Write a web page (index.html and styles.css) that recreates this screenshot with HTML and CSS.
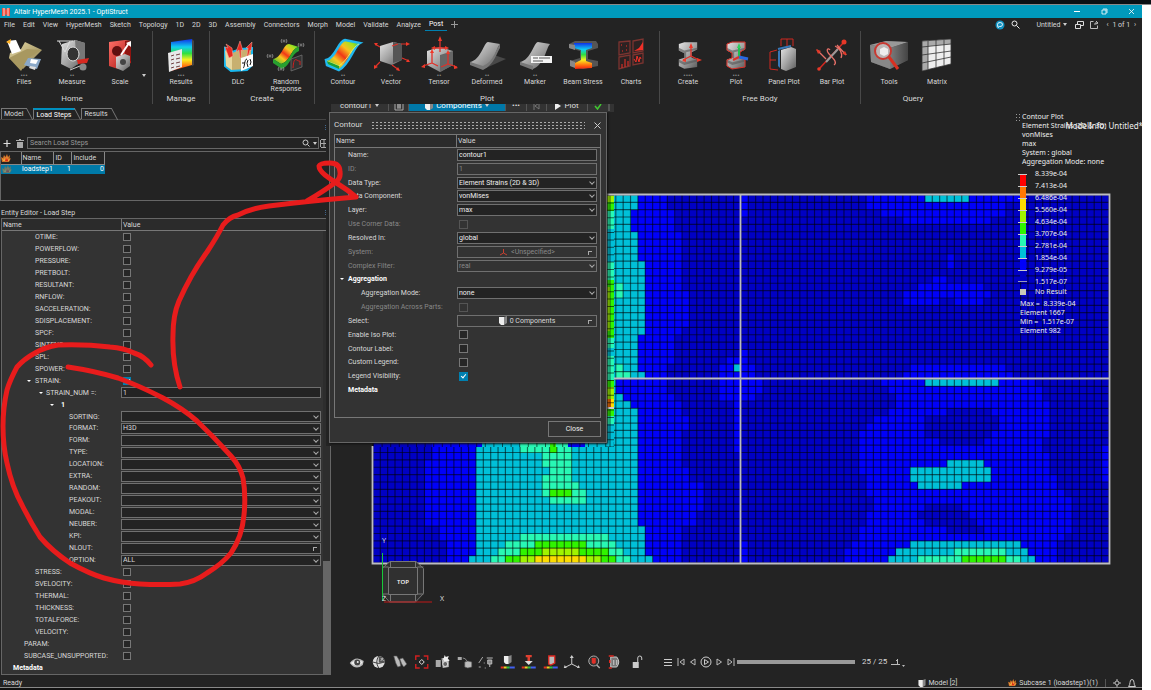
FILE: index.html
```html
<!DOCTYPE html>
<html lang="en">
<head>
<meta charset="utf-8">
<title>Altair HyperMesh 2025.1 - OptiStruct</title>
<link rel="stylesheet" href="styles.css">
</head>
<body>
<svg class="defs" aria-hidden="true">
  <defs>
    <linearGradient id="steel" x1="0" y1="0" x2="1" y2="1"><stop offset="0" stop-color="#e4e4e4"/><stop offset=".5" stop-color="#a4a4a4"/><stop offset="1" stop-color="#5c5c5c"/></linearGradient>
    <linearGradient id="dim" x1="0" y1="0" x2="1" y2="0"><stop offset="0" stop-color="#7c7c7c"/><stop offset="1" stop-color="#444"/></linearGradient>
    <linearGradient id="rain" x1="0" y1="0" x2="0" y2="1"><stop offset="0" stop-color="#1030e8"/><stop offset=".25" stop-color="#10d0f0"/><stop offset=".45" stop-color="#30e040"/><stop offset=".65" stop-color="#f8f020"/><stop offset=".85" stop-color="#ff7010"/><stop offset="1" stop-color="#f02010"/></linearGradient>
    <linearGradient id="heat" x1="1" y1="0" x2="0" y2="1"><stop offset="0" stop-color="#20c830"/><stop offset=".2" stop-color="#a8e020"/><stop offset=".35" stop-color="#f8c020"/><stop offset=".52" stop-color="#f03818"/><stop offset=".68" stop-color="#f8c820"/><stop offset="1" stop-color="#18c838"/></linearGradient>
    <linearGradient id="paper" x1="0" y1="0" x2="1" y2="1"><stop offset="0" stop-color="#e8dca8"/><stop offset="1" stop-color="#8a7a48"/></linearGradient>
    <linearGradient id="crimson" x1="0" y1="0" x2="1" y2="1"><stop offset="0" stop-color="#ff7068"/><stop offset="1" stop-color="#a81410"/></linearGradient>
    <symbol id="flame" viewBox="0 0 10 8"><path d="M1 8 0 3l2 1 1-3 1.500 2L6 0l1 3 2-2-.5 4L10 4 8 8z" fill="#d07028"/><path d="M2 7 1 4l2 2 1-3 1 2 1-3 1 4 2-2-1 3z" fill="#f0b040"/><path d="m4 7 1-4 1 3 1-2v3z" fill="#e02818"/></symbol>
    <symbol id="part" viewBox="0 0 8 9"><path d="M0 1h5v8H2L0 7z" fill="#eee"/><path d="M5 1 8 0v7L5 9z" fill="#888"/></symbol>
    <symbol id="ibeam" viewBox="0 0 24 30"><path d="M2 3 8 1h14v8l-6 3v6l6 2v8L8 30l-6-3v-7l6-2v-5L2 10z" fill="url(#steel)"/><path d="m2 10 6 3v5l2 1v-7l12-3v-2L8 10 2 7zM2 20l6 3 14-3v2L8 26l-6-3z" fill="#555" opacity=".6"/></symbol>
  </defs>
</svg>
<div class="desk"></div>
<div class="app">
  <header class="title">
    <svg width="8" height="8" viewBox="0 0 8 8"><path d="M0 0h3l1 2 1-2h3v8H5L4 6 3 8H0z" fill="#f0503c"/><path d="M2 0v8M6 0v8" stroke="#fff" stroke-width=".8"/></svg>
    <span class="grow">Altair HyperMesh 2025.1 - OptiStruct</span>
    <div class="winctl">
      <button aria-label="Minimize"><svg width="7" height="7"><path d="M0 3.500h6" stroke="#fff"/></svg></button>
      <button aria-label="Restore"><svg width="7" height="7" fill="none" stroke="#fff" stroke-width=".8"><path d="M1 2h4v4H1zM2 1h4v4"/></svg></button>
      <button aria-label="Close window"><svg width="7" height="7"><path d="m1 1 5 5m0-5L1 6" stroke="#fff" stroke-width=".8"/></svg></button>
    </div>
  </header>
  <nav class="menu">
    <button>File</button><button>Edit</button><button>View</button><button>HyperMesh</button><button>Sketch</button><button>Topology</button><button>1D</button><button>2D</button><button>3D</button><button>Assembly</button><button>Connectors</button><button>Morph</button><button>Model</button><button>Validate</button><button>Analyze</button><button class="on">Post</button><button aria-label="Add ribbon" class="plus"><svg width="7" height="7"><path d="M3.500 0v7M0 3.500h7" stroke="#999"/></svg></button>
    <span class="grow"></span>
    <div class="menuright">
      <svg width="10" height="10"><circle cx="5" cy="5" r="4.500" fill="#1090c0"/><path d="M3 7.500 2.500 4.500a2.500 2 0 1 1 2 2z" fill="none" stroke="#fff" stroke-width=".9"/></svg>
      <svg width="9" height="9" fill="none" stroke="#eee"><circle cx="3.500" cy="3.500" r="2.500"/><path d="m5.500 5.500 3 3"/></svg>
      <button class="doc">Untitled <i></i></button>
      <svg width="9" height="8" fill="#232323" stroke="#ddd"><path d="M2.500.5h6v4h-6z"/><path d="M.5 3.500h5v4h-5z"/></svg>
      <svg width="9" height="9" fill="none" stroke="#bbb"><path d="M3.500 1.500h-3v7h7v-3M6 1l2 2-2 1M5 5V3h3"/></svg>
      <span class="pages"><b>‹</b> 1 of 1 <b>›</b></span>
    </div>
  </nav>

  <div class="ribbon">
    <section class="group home">
      <div class="tools">
        <button class="tool"><svg viewBox="0 0 38 36"><path d="m5 15 11-4 4-7 17 8-19 19L4 20z" fill="url(#paper)"/><path d="m4 20 18-9 14 1-12 8-8 13z" fill="#a89860"/><path d="m2 3 9-1 5 11-9 3z" fill="#fff"/><path d="m1 4 5-3-1 5z" fill="#ffb020"/><path d="m23 20 13 1-4 10-13-4z" fill="#8aa8c8"/><path d="m26 21 7 1-2 4-6-1z" fill="#fff"/><path d="m25 28 6 1-1 3-6-2z" fill="#ddd"/></svg><em>•••</em>Files</button>
        <button class="tool"><svg viewBox="0 0 38 36"><path d="m9 6 13-4 10 3v16L18 31 8 26z" fill="url(#steel)"/><path d="m22 2 10 3v16l-8 6z" fill="#777"/><ellipse cx="20" cy="16" rx="6" ry="7" fill="#333" stroke="#ddd"/><path d="M4 3h16M6 3l6 11 5-11" fill="none" stroke="#ddd"/><path d="m24 22 12-2-2 5-9 1z" fill="#d82820"/><path d="m17 32 10-4" stroke="#ccc"/><circle cx="30" cy="29" r="3.500" fill="#888"/></svg><em>••</em>Measure</button>
        <button class="tool"><svg viewBox="0 0 38 36"><path d="m8 4 16-2 6 1v22l-13 6-9-3z" fill="url(#crimson)"/><path d="M24 3v23l6-3V3z" fill="#901410"/><circle cx="16" cy="13" r="5" fill="#601010"/><path d="m15 19 9-3 5 2v10l-7 5-7-3z" fill="url(#steel)"/><circle cx="22" cy="24" r="3" fill="#444"/><path d="m20 17 8-12" stroke="#fff" stroke-width="2"/><path d="m25 5 5-2v6z" fill="#fff"/></svg><em>&nbsp;</em>Scale</button>
        <i class="more"></i>
      </div><h2>Home</h2>
    </section>
    <section class="group">
      <div class="tools">
        <button class="tool"><svg viewBox="0 0 38 36"><path d="m9 4 21-3v26L9 33z" fill="url(#rain)"/><path d="m30 1 2 2v24l-2 1z" fill="#444"/><path d="m6 15 14-4v18L7 34z" fill="#e8e8e8"/><path d="m9 18 3-1m-3 5 3-1m-3 5 3-1m-3 5 3-1m2-12 4-1m-4 5 4-1m-4 5 4-1m-4 5 4-1" stroke="#704040"/></svg><em>•••</em>Results</button>
      </div><h2>Manage</h2>
    </section>
    <section class="group">
      <div class="tools">
        <button class="tool"><svg viewBox="0 0 38 36"><path d="m6 10 7 4 9-3 11-1v17l-5 5-16 1-6-5z" fill="#c8b070" stroke="#18b8f0" stroke-width="2"/><path d="m6 12 7 7v13l-6-4z" fill="#e8d8a0"/><path d="m10 20-4-11 3 1-2-4 6 4 1 8zM21 20l-1-8-3 2 4-11 3 10-2-1v8zM28 18l1-8-2 0 6-6-1 9-1-1-2 7z" fill="#e82820" stroke="#ffb0a0" stroke-width=".5"/><path d="m22 20 12-4v12l-12 5z" fill="#fff"/><path d="M24 30c2 0 1-9 4-9m-5 4h3m3-3q-2 3 0 7m2-8q2 3 0 6" stroke="#111" fill="none"/></svg><em>&nbsp;</em>DLC</button>
        <button class="tool"><svg viewBox="0 0 38 36"><path d="M6 21C15 20 16 6 22 6l10 3c-8 1-8 14-18 17z" fill="url(#heat)"/><path d="m6 21 8 5c10-3 10-16 18-17v4c-8 3-8 14-17 18l-9-6z" fill="#28a030"/><path d="m24 21 11-4v12l-11 4z" fill="#333" stroke="#777" stroke-width=".7"/><path d="M26 30c1-14 4-6 7-7v4" stroke="#d02020" fill="none"/><g fill="none" stroke="#999" stroke-width=".8"><circle cx="17" cy="3" r="1"/><path d="M15 1q-2 2 0 4m4-4q2 2 0 4"/><circle cx="34" cy="7" r="1"/><path d="M32 5q-2 2 0 4m4-4q2 2 0 4"/><circle cx="3" cy="18" r="1"/><path d="M1 16q-2 2 0 4m4-4q2 2 0 4"/><circle cx="14" cy="31" r="1"/><path d="M12 29q-2 2 0 4m4-4q2 2 0 4"/></g></svg><em>&nbsp;</em>Random<br>Response</button>
      </div><h2>Create</h2>
    </section>
    <section class="group">
      <div class="tools">
        <button class="tool"><svg viewBox="0 0 38 36"><path d="M2 22C12 20 14 3 21 2l15 3c-7 4-10 21-21 27L3 27z" fill="url(#heat)" stroke="#20b8f0" stroke-width="2.500"/><path d="m3 23 12 5C25 21 28 9 35 6" fill="none" stroke="#d8f070" stroke-width="1"/><path d="m3 23 12 5v3L4 26z" fill="#18a038"/></svg><em>••</em>Contour</button>
        <button class="tool"><svg viewBox="0 0 38 36"><path d="m8 8 13-4 9 2v16l-10 5-12-4z" fill="url(#steel)"/><path d="m21 4 9 2v16l-9 3z" fill="#555"/><g stroke="#e03028" stroke-width="1.200"><path d="m8 9-5-3M29 6h7M8 24l-5 5M20 27l7 5M30 20l7 3M20 8l6-2"/></g><g fill="#f03828"><path d="m2 5 4 0-2 3zM38 6l-4-2v4zM2 31l0-4 4 2zM28 33l-4-1 2-3zM38 24l-4 0 2-3z"/></g></svg><em>••</em>Vector</button>
        <button class="tool"><svg viewBox="0 0 38 36"><path d="m7 13 13-4 13 4v14l-13 7-13-7z" fill="url(#steel)"/><path d="m20 17 13-4v14l-13 7z" fill="#666"/><path d="M20 14V0M12 25V13m0 12-9 3m9-3 6 3M28 26V14m0 12-7 3m7-3 9 3M13 10h14" stroke="#e03028" stroke-width="1.300" fill="none"/><path d="m20-2 2 5h-4zM12 11l2 4h-4zM28 12l2 4h-4zM1 29l4-3v4zM38 30l-4-3v4zM11 10l4-2v4zM29 10l-4-2v4z" fill="#f03828"/></svg><em>••</em>Tensor</button>
        <button class="tool"><svg viewBox="0 0 38 36"><path d="m12 25 14-8 12 4-20 9z" fill="#484848"/><path d="M2 24C13 22 16 4 20 4l12 2c-4 4-5 20-17 25z" fill="url(#steel)"/><path d="m2 24 13 4c11-4 13-18 17-22v4c-3 4-6 17-17 22L2 27z" fill="#777"/></svg><em>••</em>Deformed</button>
        <button class="tool"><svg viewBox="0 0 38 36"><path d="M4 24C15 22 18 4 22 4l12 2c-4 4-5 20-17 25z" fill="url(#steel)"/><path d="m4 24 13 4v4L4 27z" fill="#777"/><path d="M15 18h21v7H15z" fill="#f4f4f4"/><path d="M17 20h5m1 0h11M17 23h10" stroke="#555" stroke-width="1"/></svg><em>••</em>Marker</button>
        <button class="tool"><svg viewBox="0 0 38 36"><path d="m5 6 6-3h21l2 3v4l-10 3v8l10 2v5l-15 3-13-3v-5l10-3v-7L5 10z" fill="#555"/><path d="M10 5h18v5l-6 2v11l6 2v5l-17 1v-6l6-3V12l-7-2z" fill="url(#rain)"/><path d="m5 6 6 1v5l-6-2zM6 22l5 2v6l-5-2z" fill="#888"/></svg><em>&nbsp;</em>Beam Stress</button>
        <button class="tool"><svg viewBox="0 0 38 36"><g fill="#2c2222" stroke="#7c3430" stroke-width="1.300"><path d="m7 4 11-1v12L7 17zM21 3l10-2v12l-10 2zM7 19l11-2v11L7 31zM21 17l10-2v10l-10 2z"/></g><g fill="#f03028" stroke="#f03028"><path d="M9 7h1m4 1h1m-5 5h1m3-1h1"/><path d="m22 13 5-3 4-6v8z" stroke="none"/><path d="M10 30v-4m3 3v-8m3 7v-5"/><path d="m22 21 2 3 1-6 2 6 1-5 1 2" fill="none"/></g></svg><em>&nbsp;</em>Charts</button>
      </div><h2>Plot</h2>
    </section>
    <section class="group">
      <div class="tools">
        <button class="tool"><svg viewBox="0 0 38 36"><use href="#ibeam" x="8" y="3" width="22" height="28"/><path d="M22 18V8m0 10 8 4m-8-4-8 4" stroke="#e03028" stroke-width="1.300"/><path d="m22 5 2 5h-4zM33 22l-5-2v4zM13 23l4-3v4z" fill="#f03828"/></svg><em>••••</em>Create</button>
        <button class="tool"><svg viewBox="0 0 38 36"><use href="#ibeam" x="8" y="3" width="22" height="28"/><path d="m10 6 5-2h13v7l-5 3v6l5 2v7l-13 2-5-3v-6l5-2v-5l-5-3z" fill="none" stroke="#e03028"/><path d="M22 19V9" stroke="#20c050" stroke-width="2"/><path d="m22 5 2 5h-4z" fill="#30d060"/><path d="m22 19 9 2" stroke="#2868e0" stroke-width="3"/><path d="m22 19-6 3" stroke="#e03028" stroke-width="2"/></svg><em>•••</em>Plot</button>
        <button class="tool"><svg viewBox="0 0 38 36"><path d="m16 12 10-3 5 2v18l-10 4-5-2z" fill="url(#steel)"/><path d="m13 13 2-1v18l-2-2z" fill="#3878b8"/><path d="m13 11 13-3" stroke="#3878b8" stroke-width="2"/><path d="M5 14v17m0-17 7-2M5 22h6m-6 9 8 1M16 8V1h12v7M22 1v7" fill="none" stroke="#d02820" stroke-width="1"/></svg><em>&nbsp;</em>Panel Plot</button>
        <button class="tool"><svg viewBox="0 0 38 36"><path d="M6 31 32 3" stroke="#d02820" stroke-width="1.600"/><path d="m13 24 12-13" stroke="#999" stroke-width="2"/><path d="m4 12 9 9m11-14 9 10M17 12c-2-3-5 0 0 5s7 8 4 10M22 8c5 2 8 8 6 12" fill="none" stroke="#e87068" stroke-width="1.300"/><path d="m3 11 5 2-3 3zM34 17l-5-1 3-3z" fill="#e03828"/><circle cx="31" cy="4" r="2.500" fill="#e83828"/><circle cx="6" cy="31" r="1.800" fill="#e83828"/></svg><em>&nbsp;</em>Bar Plot</button>
      </div><h2>Free Body</h2>
    </section>
    <section class="group last">
      <div class="tools">
        <button class="tool"><svg viewBox="0 0 38 36"><path d="m0 7 16-4 22 1v18L20 31 1 24z" fill="#555"/><path d="m0 7 20 3v21L1 24z" fill="#888"/><path d="m0 7 16-4 22 1-18 6z" fill="#999"/><path d="m20 10 18-6v18l-18 9z" fill="url(#dim)"/><circle cx="13" cy="13" r="8" fill="#c8c0c0" fill-opacity=".8" stroke="#c83830" stroke-width="2"/><path d="m10 11 4-2 4 2v5l-4 2-4-2z" fill="#eee"/><path d="m19 19 9 12" stroke="#d83020" stroke-width="3"/></svg><em>&nbsp;</em>Tools</button>
        <button class="tool"><svg viewBox="0 0 38 36"><path d="m4 3 29-2v25L4 33z" fill="#eee"/><path d="m4 3 29-2v5L4 9z" fill="#aaa"/><path d="m4 3 6 0v28l-6 2z" fill="#aaa"/><path d="m4 3 29-2v25L4 33zM4 9l29-3M4 17l29-4M4 25l29-6M10 3v28M18 2v27M26 2v25" stroke="#333" stroke-width=".8" fill="none"/></svg><em>&nbsp;</em>Matrix</button>
      </div><h2>Query</h2>
    </section>
  </div>

  <main class="work">
    <aside class="side">
      <div class="tabs"><button>Model</button><button class="on">Load Steps</button><button>Results</button></div>
      <div class="grip">⁝</div>
      <div class="search">
        <button aria-label="Add"><svg width="8" height="8"><path d="M4 1v7M.5 4.500h7" stroke="#ddd" stroke-width="1.200"/></svg></button>
        <button aria-label="Delete"><svg width="8" height="9"><path d="M1 3h6v6H1zM0 1h8v1H0zM3 0h2v1H3z" fill="#aaa"/></svg></button>
        <div class="box"><input type="text" aria-label="Search Load Steps" placeholder="Search Load Steps"><svg width="8" height="8" fill="none" stroke="#ccc"><circle cx="3.500" cy="3.500" r="2.500"/><path d="m5.500 5.500 2 2"/></svg><i class="tri"></i></div>
        <svg width="7" height="9" fill="none" stroke="#aaa"><path d="M1 .5h6M.5 1v7M1 8.500h6M1 4.500h5M4 1v7"/></svg>
      </div>
      <div class="steps">
        <table>
          <thead><tr><th class="c0"><svg width="10" height="8"><use href="#flame"/></svg></th><th class="c1">Name</th><th class="c2">ID</th><th class="c3">Include</th></tr></thead>
          <tbody><tr><td><svg width="10" height="8" class="faded"><use href="#flame"/></svg></td><td class="c1">loadstep1</td><td class="num">1</td><td class="num">0</td></tr></tbody>
        </table>
      </div>
      <h3>Entity Editor - Load Step<span>⁝</span></h3>
      <div class="editor">
        <div class="head"><span>Name</span><span>Value</span></div>
        <div class="body">
          <div class="rows">
            <label class="row l2"><span>OTIME:</span><input type="checkbox"></label>
            <label class="row l2"><span>POWERFLOW:</span><input type="checkbox"></label>
            <label class="row l2"><span>PRESSURE:</span><input type="checkbox"></label>
            <label class="row l2"><span>PRETBOLT:</span><input type="checkbox"></label>
            <label class="row l2"><span>RESULTANT:</span><input type="checkbox"></label>
            <label class="row l2"><span>RNFLOW:</span><input type="checkbox"></label>
            <label class="row l2"><span>SACCELERATION:</span><input type="checkbox"></label>
            <label class="row l2"><span>SDISPLACEMENT:</span><input type="checkbox"></label>
            <label class="row l2"><span>SPCF:</span><input type="checkbox"></label>
            <label class="row l2"><span>SINTENS:</span><input type="checkbox"></label>
            <label class="row l2"><span>SPL:</span><input type="checkbox"></label>
            <label class="row l2"><span>SPOWER:</span><input type="checkbox"></label>
            <label class="row l2 open"><span>STRAIN:</span><input type="checkbox" checked></label>
            <label class="row l3 open"><span>STRAIN_NUM =:</span><input type="text" value="1"></label>
            <div class="row l4 open"><strong>1</strong></div>
            <label class="row l5"><span>SORTING:</span><span class="sel"><select><option></option></select></span></label>
            <label class="row l5"><span>FORMAT:</span><span class="sel"><select><option>H3D</option></select></span></label>
            <label class="row l5"><span>FORM:</span><span class="sel"><select><option></option></select></span></label>
            <label class="row l5"><span>TYPE:</span><span class="sel"><select><option></option></select></span></label>
            <label class="row l5"><span>LOCATION:</span><span class="sel"><select><option></option></select></span></label>
            <label class="row l5"><span>EXTRA:</span><span class="sel"><select><option></option></select></span></label>
            <label class="row l5"><span>RANDOM:</span><span class="sel"><select><option></option></select></span></label>
            <label class="row l5"><span>PEAKOUT:</span><span class="sel"><select><option></option></select></span></label>
            <label class="row l5"><span>MODAL:</span><span class="sel"><select><option></option></select></span></label>
            <label class="row l5"><span>NEUBER:</span><span class="sel"><select><option></option></select></span></label>
            <label class="row l5"><span>KPI:</span><span class="sel"><select><option></option></select></span></label>
            <label class="row l5"><span>NLOUT:</span><span class="sel pick"><input type="text"></span></label>
            <label class="row l5"><span>OPTION:</span><span class="sel"><select><option>ALL</option></select></span></label>
            <label class="row l2"><span>STRESS:</span><input type="checkbox"></label>
            <label class="row l2"><span>SVELOCITY:</span><input type="checkbox"></label>
            <label class="row l2"><span>THERMAL:</span><input type="checkbox"></label>
            <label class="row l2"><span>THICKNESS:</span><input type="checkbox"></label>
            <label class="row l2"><span>TOTALFORCE:</span><input type="checkbox"></label>
            <label class="row l2"><span>VELOCITY:</span><input type="checkbox"></label>
            <label class="row l1"><span>PARAM:</span><input type="checkbox"></label>
            <label class="row l1"><span>SUBCASE_UNSUPPORTED:</span><input type="checkbox"></label>
            <div class="row l0"><strong>Metadata</strong></div>
          </div>
          <div class="scroll"><i></i><b></b></div>
        </div>
      </div>
    </aside>

    <section class="view">
      <svg class="scene" viewBox="331 107 811 560" preserveAspectRatio="xMinYMin meet">
        <g transform="translate(373 195) scale(7.36)" shape-rendering="crispEdges">
          <path fill="#0000c4" d="M0 0h100v50H0z"/>
          <path fill="#0000fa" d="M31 0h9v2h1v3h1v8h1v5h-1v1h-1v4h-1v4h1v1h1v2h1v2h-1v5h1v2h2v4h-1v2h-2v5H31zM50 0h1v3h-1zM50 21h1v2h1v2h1v2h-1v1h-2v7h-1v-7h-2v-5h1v-1h2zM50 47h1v3h-1z
            M67 0h21v1h-2v2h-2v1H72V3h-3V2h-2zM78 8h1v2h-1zM76 11h2v1h5v1h1v1h-1v1h-4v-1h-2v1h-5v-2h2v-1h2z
            M73 23h13v1h1v1h3v1h1v2h1v5h-1v2h1v3h1v2h1v1h1v5h-1v1h-1v3H64v-2h1v-1h1v-2h1v-2h1v-2h-1v-3h-1v-6h1v-1h1v-1h2v-1h1v-2h-1v-1h-1v-1h3v-1h1zM99 34h1v5h-1zM8 30h6v20h-4v-3H9v-2H7v-9h1z"/>
          <path fill="#0000c4" d="M78 29h6v1h1v2h-1v1h-1v1h-6v-1h-2v-3h3zM75 42h5v1h1v1h1v1h1v1h-5v-1h-3v-1h-1v-1h1z"/>
          <path fill="#00c0d8" d="M14 0h22v2h-1v3h1v4h1v10h-1v5h1v1h-4v2h1v1h1v1h1v16h1v4h1v1H13v-1h1zM75 0h6v1h-6zM49 23h1v1h-1zM75 25h10v1H75zM78 36h5v1h1v2h-4v1h-6v-1h-1v-2h5zM73 47h15v1h1v1h1v1H70v-1h1v-1h2z"/>
          <path fill="#28f8b4" d="M33 12h1v2h-1zM33 23h1v1h1v1h-2zM20 30h7v9h1v1h1v2h-5v-1h-1v-3h1v-1h-1v-2h-3zM20 46h12v1h1v1h1v1h1v1H16v-1h1v-1h1v-1h2zM79 48h7v1h2v1H74v-1h5z"/>
          <path fill="#30f400" d="M24 34h1v1h-1zM24 40h3v1h-3zM22 47h7v1h3v1h1v1H18v-1h2v-1h2zM80 49h6v1h-6z"/>
          <path fill="#a0f400" d="M23 48h5v1h3v1H20v-1h3z"/>
          <path fill="#fcdc00" d="M22 49h7v1h-7z"/>
        </g>
        <g fill="none" stroke="#000" stroke-opacity=".55" transform="translate(373 195) scale(7.36)">
          <path d="M-.09 25h100.100" stroke-width="50" stroke-dasharray=".16 .84"/>
          <path d="M50-.09v50.100" stroke-width="100" stroke-dasharray=".16 .84"/>
        </g>
        <g>
          <path fill="#232323" d="M331 104h41v343h-41z"/>
          <path fill="#0000c4" d="M373 440h59v7h-59z"/><path fill="#0000fa" d="M432 440h50v7h-50zM568 440h17v7h-17z"/><path fill="#00c0d8" d="M482 440h86v7h-86zM585 440h29v7h-29zM606 195h8v252h-8z"/>
          <path fill="#28f8b4" d="M520 440h48v7h-48zM606 211h8v18h-8zM606 262h8v18h-8zM606 338h8v10h-8zM606 356h8v24h-8zM606 416h8v8h-8z"/>
          <path fill="#30f400" d="M550 442h6v5h-6zM606 202h8v9h-8zM606 280h8v7h-8zM606 331h8v7h-8zM606 380h8v7h-8zM606 409h8v7h-8z"/>
          <path fill="#a0f400" d="M606 195h8v7h-8zM606 287h4v44h-4zM606 387h8v12h-8z"/><path fill="#30f400" d="M610 287h4v44h-4z"/>
          <path fill="#ff7000" d="M606 399h5v8h-5z"/><path fill="#fcdc00" d="M611 399h3v8h-3z"/>
          <path d="M610 195v252" stroke="#000" stroke-opacity=".6"/><path d="M610 195v252" stroke="#000" stroke-opacity=".6" stroke-width="8" stroke-dasharray="1 6.400"/><path d="M373 444.500h241" stroke="#000" stroke-opacity=".6" stroke-width="5" stroke-dasharray="1 7.600"/>
          <path d="M606 408h8" stroke="#ccc" stroke-width="2"/>
        </g>
        <path d="M372.500 446V563.500h737v-369H606M740.500 195v368M614 378.500h495" fill="none" stroke="#bcbcc0" stroke-width="1.800"/>
        <g fill="#303030" stroke="#777">
          <path d="M390 561.500h26l7.500 7v25l-8 8.500h-26l-7-8v-26z"/><path d="M388.500 567.500h29v27h-29zM390.500 562v5m25-5v5m-25 27v7m25-7v7m-33-34h6m29 0h6m-41 27h6m29 0h6"/>
          <path d="M382.500 553v48" stroke="#18c838"/><path d="M384 602h48" stroke="#c01818"/>
        </g>
        <g class="axis"><text x="403" y="584" text-anchor="middle" class="top">TOP</text><text x="382" y="543">Y</text><text x="382" y="601">Z</text><text x="440" y="601">X</text></g>
      </svg>

      <div class="legend">
        <i class="handle"></i>
        <span class="info">ModelInfo: Untitled*</span>
        <p>Contour Plot<br>Element Strains (2D &amp; 3D)<br>vonMises<br>max<br>System : global<br>Aggregation Mode: none</p>
        <div class="scale">
          <div class="bar"><i class="r1"></i><i class="r2"></i><i class="r3"></i><i class="r4"></i><i class="r5"></i><i class="r6"></i><i class="r7"></i><i class="r8"></i><i class="r9"></i></div>
          <ol><li>8.339e-04</li><li>7.413e-04</li><li>6.486e-04</li><li>5.560e-04</li><li>4.634e-04</li><li>3.707e-04</li><li>2.781e-04</li><li>1.854e-04</li><li>9.279e-05</li><li>1.517e-07</li></ol>
        </div>
        <div class="nores"><i></i>No Result</div>
        <div class="minmax">Max =&nbsp; 8.339e-04<br>Element 1667<br>Min =&nbsp; 1.517e-07<br>Element 982</div>
      </div>

      <div class="viewbar">
        <div class="icons">
          <svg viewBox="0 0 16 14"><path d="M1 8q6-8 14-2l-1 4q-7 6-13-2z" fill="#bbb"/><path d="M2 8q6-5 12-1-5 7-12 1z" fill="#eee"/><circle cx="8.500" cy="7.500" r="3" fill="#444"/><circle cx="9" cy="7" r="1" fill="#eee"/></svg>
          <svg viewBox="0 0 16 14"><circle cx="8" cy="7" r="6" fill="#ddd"/><path d="M2 7q6 3 12 0M8 1q-4 6 0 12" fill="none" stroke="#444"/><path d="M8 7.500V1a6 6 0 0 1 6 6q-3 1.500-6 .5z" fill="#555"/><path d="m10 3 3 3m-3 0 2-3" stroke="#ddd" stroke-width=".7"/></svg>
          <svg viewBox="0 0 16 14"><path d="m2 1 3 0 3 5 1 5-3 1-2-4zM8 4l3-1 4 6-3 3-2-3z" fill="#bbb" stroke="#555" stroke-width=".6"/></svg>
          <svg viewBox="0 0 16 14"><path d="M2 5V1h4m4 0h4v4m0 4v4h-4m-4 0H2V9" fill="none" stroke="#d02020" stroke-width="1.400"/><path d="M8 4.500 10.500 7 8 9.500 5.500 7z" fill="none" stroke="#ddd"/></svg>
          <svg viewBox="0 0 16 14"><path d="M1 5h5v7H1z" fill="#aaa"/><path d="m7 5 7-1v8l-6 1z" fill="#bbb"/><path d="m10 0 1 2 3-1-1 3 2 2-3 0-2 2-1-3-3-1 3-1z" fill="#eee"/><circle cx="10.500" cy="9" r="2.500" fill="#666" stroke="#ddd"/></svg>
          <svg viewBox="0 0 16 14"><path d="M1 2h4v3H1z" fill="#aaa"/><path d="M6 3q3 0 4 3" stroke="#888" fill="none"/><path d="m8 7 3-1 4 1v5l-4 1-3-1z" fill="#bbb" stroke="#555" stroke-width=".6"/></svg>
          <svg viewBox="0 0 16 14"><path d="m1 8 4-6M1 12h2m3-4h1m0 5h1" stroke="#aaa"/><path d="M9 3h6m-5 2h4v4h-4zm2 4v3" stroke="#bbb" fill="#888"/></svg>
          <svg viewBox="0 0 16 14"><use href="#part" x="4" y="0" width="8" height="9"/><path d="M1 12.500h3" stroke="#e03020" stroke-width="2"/><path d="M4 12.500h3" stroke="#f0d020" stroke-width="2"/><path d="M7 12.500h3" stroke="#30c040" stroke-width="2"/><path d="M10 12.500h5" stroke="#4060f0" stroke-width="2"/></svg>
          <svg viewBox="0 0 16 14"><path d="M5 1h6M8 2v5" stroke="#e04030" stroke-width="2.500"/><path d="m4 6 4 4 4-4z" fill="#ddd"/><path d="M1 12.500h3" stroke="#e03020" stroke-width="2"/><path d="M4 12.500h3" stroke="#f0d020" stroke-width="2"/><path d="M7 12.500h3" stroke="#30c040" stroke-width="2"/><path d="M10 12.500h5" stroke="#4060f0" stroke-width="2"/></svg>
          <svg viewBox="0 0 16 14"><path d="M6 1h6v7l-4 2-2-1z" fill="#bbb" stroke="#e02820" stroke-width="1.300"/><path d="M1 12.500h3" stroke="#e03020" stroke-width="2"/><path d="M4 12.500h3" stroke="#f0d020" stroke-width="2"/><path d="M7 12.500h3" stroke="#30c040" stroke-width="2"/><path d="M10 12.500h5" stroke="#4060f0" stroke-width="2"/></svg>
          <svg viewBox="0 0 16 14"><path d="M8 9V2m0 7-6 3m6-3 6 3" stroke="#ccc"/><path d="m8 0 2 3H6zM0 13l1-3 2 3zM16 13l-3 0 2-3z" fill="#ccc"/></svg>
          <svg viewBox="0 0 16 14"><circle cx="8" cy="6" r="5" fill="#333" stroke="#aaa"/><path d="M6 3h4v5l-2 1-2-1z" fill="#e03028"/><path d="m11 10 3 3" stroke="#aaa" stroke-width="1.500"/></svg>
          <svg viewBox="0 0 16 14"><path d="M4 2h6q4 5 0 10H4zM7 5v5m3-5v5" fill="#777" stroke="#ccc"/><path d="M2 1h5M2 13h3m-2-5V5" stroke="#e02820" stroke-width="1.500"/></svg>
          <svg viewBox="0 0 16 14"><path d="m4 7 6 0v6H4z" fill="#ccc"/><path d="M9 7V3q0-2 2-2t2 2v2" stroke="#ccc" fill="none"/></svg>
        </div>
        <div class="play">
          <svg width="9" height="9" stroke="#ccc"><path d="M0 1.500h8M0 4.500h8M0 7.500h8"/></svg>
          <svg width="8" height="8" fill="none" stroke="#bbb"><path d="M1 0v8M7 1v6L3 4z"/></svg>
          <svg width="7" height="8" fill="none" stroke="#bbb"><path d="M6 1v6L1.500 4z"/></svg>
          <svg width="12" height="12" fill="none" stroke="#ccc"><circle cx="6" cy="6" r="5"/><path d="m4.500 3.500 4 2.500-4 2.500z"/></svg>
          <svg width="7" height="8" fill="none" stroke="#bbb"><path d="M1 1v6l4.500-3z"/></svg>
          <svg width="8" height="8" fill="none" stroke="#bbb"><path d="M7 0v8M1 1v6l4-3z"/></svg>
        </div>
        <input type="range" aria-label="Frame" min="1" max="25" value="25">
        <span class="frame">25 / 25</span>
        <svg width="15" height="9" stroke="#bbb"><path d="M0 6.500h9M6.500 1v5M5 2.500h2"/><path d="M11 7h3l-1.500 2z" fill="#bbb" stroke="none"/></svg>
      </div>

      <div class="backing"></div>
      <div class="peek">
        <div class="strip">
          <span class="p1">contour1 <i></i></span>
          <span class="p2"><svg width="10" height="10" fill="none" stroke="#aaa"><path d="M1 1h8v8H1zM3 4h4M3 6h4M4 3v5M6 3v5"/></svg></span>
          <span class="p3"><svg width="8" height="9"><use href="#part"/></svg> Components <i></i></span>
          <span class="p4">•••</span>
          <span class="p5"><svg width="7" height="8" fill="none" stroke="#777"><path d="M1 0v8M6 1v6L2 4z"/></svg></span>
          <span class="p6"><svg width="6" height="8"><path d="m0 0 6 4-6 4z" fill="#eee"/></svg> Plot</span>
          <span class="p7"><svg width="8" height="8" fill="none" stroke="#40c830" stroke-width="1.500"><path d="m1 4 2.500 3L7 2"/></svg></span>
          <span class="p8"></span>
        </div>
      </div>
      <div class="dialog" role="dialog" aria-label="Contour">
        <div class="dtitle"><span>Contour</span><i></i><button aria-label="Close dialog"><svg width="7" height="7"><path d="m.5.5 6 6m0-6-6 6" stroke="#ccc"/></svg></button></div>
        <div class="panel">
          <div class="head"><span>Name</span><span>Value</span></div>
          <div class="rows">
            <label class="row"><span>Name:</span><input type="text" value="contour1"></label>
            <label class="row off"><span>ID:</span><input type="text" value="1" disabled></label>
            <label class="row"><span>Data Type:</span><span class="sel"><select><option>Element Strains (2D &amp; 3D)</option></select></span></label>
            <label class="row"><span>Data Component:</span><span class="sel"><select><option>vonMises</option></select></span></label>
            <label class="row"><span>Layer:</span><span class="sel"><select><option>max</option></select></span></label>
            <label class="row off"><span>Use Corner Data:</span><input type="checkbox" disabled></label>
            <label class="row"><span>Resolved In:</span><span class="sel"><select><option>global</option></select></span></label>
            <label class="row off"><span>System:</span><button class="pickbtn" disabled><svg width="9" height="8"><path d="M4.500 1v4L1 7m3.500-2L8 7" stroke="#c84030" fill="none"/></svg> &lt;Unspecified&gt;</button></label>
            <label class="row off"><span>Complex Filter:</span><span class="sel"><select disabled><option>real</option></select></span></label>
            <div class="row open"><strong>Aggregation</strong></div>
            <label class="row sub"><span>Aggregation Mode:</span><span class="sel"><select><option>none</option></select></span></label>
            <label class="row sub off"><span>Aggregation Across Parts:</span><input type="checkbox" disabled></label>
            <label class="row"><span>Select:</span><button class="pickbtn"><svg width="8" height="9"><use href="#part"/></svg> 0 Components</button></label>
            <label class="row"><span>Enable Iso Plot:</span><input type="checkbox"></label>
            <label class="row"><span>Contour Label:</span><input type="checkbox"></label>
            <label class="row"><span>Custom Legend:</span><input type="checkbox"></label>
            <label class="row"><span>Legend Visibility:</span><input type="checkbox" checked></label>
            <div class="row"><strong>Metadata</strong></div>
          </div>
        </div>
        <button class="closebtn">Close</button>
      </div>
    </section>
  </main>

  <footer class="status">
    <span class="grow">Ready</span>
    <span class="model"><svg width="8" height="8"><use href="#part"/></svg>Model [2]</span>
    <span class="subcase"><svg width="9" height="7"><use href="#flame"/></svg>Subcase 1 (loadstep1)(1)</span>
    <i></i>
    <svg width="8" height="8" fill="none" stroke="#bbb"><circle cx="4" cy="4" r="2"/><path d="M4 0v2m0 4v2M0 4h2m4 0h2"/></svg>
    <svg width="8" height="8" fill="none" stroke="#ccc"><path d="M.5 7.500Q2 6 2 3.500q0-3 2-3t2 3q0 2.500 1.500 4z"/></svg>
  </footer>
  <div class="base"></div>
</div>
<svg class="marks" viewBox="0 0 400 600" width="400" height="600">
  <path d="M151 365Q144 356 134 353Q124 348 110 347Q85 344 58 345Q45 347 35 353Q24 359 17 367Q10 380 7 390Q3 408 3 426Q3 446 7 463Q12 487 22 505Q31 523 40 537Q52 551 70 563Q90 574 104 578Q122 583 140 584Q160 585 180 584Q195 582 207 573Q222 564 231 553Q242 537 244 515Q246 495 243 478Q240 466 231 456Q214 437 197 421Q182 408 163 398Q140 386 118 378Q95 371 68 367"/>
  <path d="M180 387q-8-24-7-52 0-20 6-34 12-27 28-49 10-15 16-27 6-8 15-10 14-7 31-9 40-5 87-9-8-7-18-13-8-5-13-9-6-5-6-9 1-3 11-3 10 0 10 9 1 6-4 10-12 9-29 19"/>
</svg>
</body>
</html>
```
FILE: styles.css
```css
* { box-sizing: border-box; }
html, body { height: 100%; }
body { margin: 0; display: flex; flex-direction: column; background: #fff; color: #d8d8d8; font: 7px/8px Roboto, "Liberation Sans", sans-serif; position: relative; overflow: hidden; }
button, input, select { font: inherit; color: inherit; background: none; border: 0; padding: 0; margin: 0; border-radius: 0; }
svg { display: block; flex: none; }
h2, h3, p, ol { margin: 0; padding: 0; font: inherit; list-style: none; }
strong { color: #fff; }
.defs { position: absolute; width: 0; height: 0; }
.grow { flex: 1; }
.desk { height: 5px; background: #0a1014; border-bottom: 1px solid #888; }
.app { flex: 1; min-height: 0; margin-right: 9px; background: #232323; display: flex; flex-direction: column; }

.title { height: 13px; background: #0099bc; color: #fff; display: flex; align-items: center; padding: 0 7px 0 2px; gap: 4px; }
.winctl { display: flex; gap: 20px; }
.menu { height: 13px; display: flex; align-items: stretch; padding: 0 4px 0 0; }
.menu > button { padding: 0 4px; white-space: nowrap; }
.menu .on { border-bottom: 1px solid #0080b0; color: #fff; }
.menuright { display: flex; align-items: center; gap: 6px; }
.doc { display: flex; align-items: center; gap: 2px; margin: 0 2px 0 10px; }
.doc i, .tri, .more, .peek i { border: 2px solid transparent; border-top: 3px solid #ccc; border-bottom: 0; width: 4px; }
.pages b { font-weight: 400; padding: 0 2px; }

.ribbon { height: 73px; display: flex; }
.group { border-right: 1px solid #484848; padding: 0 4px; display: flex; flex-direction: column; justify-content: space-between; }
.group.home { padding: 0 8px 0 0; }
.group.last { border: 0; }
.group h2 { text-align: center; font-size: 8px; line-height: 10px; }
.tools { display: flex; position: relative; }
.tool { width: 48px; display: flex; flex-direction: column; align-items: center; justify-content: flex-start; padding-top: 7px; line-height: 7px; white-space: nowrap; }
.tool svg { width: 38px; height: 36px; overflow: visible; }
.tool em { font-style: normal; font-size: 7px; line-height: 5px; color: #888; }
.more { position: absolute; right: -2px; top: 43px; }

.work { flex: 1; min-height: 0; display: flex; margin-top: 4px; }
.side { width: 331px; display: flex; flex-direction: column; }
.tabs { display: flex; height: 12px; border-bottom: 1px solid #444; padding-left: 1px; }
.tabs button { border: 1px solid #777; border-bottom: 0; border-right: 0; padding: 0 4px 0 2px; line-height: 8px; position: relative; margin-right: 6px; }
.tabs button::after { content: ""; position: absolute; right: -3px; top: -1px; height: 12px; border-right: 1px solid #777; transform: skewX(28deg); }
.tabs .on { border-top: 2px solid #0090c0; color: #fff; }
.tabs .on::after { top: -2px; }
.grip { height: 16px; text-align: right; padding: 4px 4px 0 0; }
.search { height: 14px; display: flex; align-items: center; gap: 5px; padding-left: 3px; }
.box { flex: 1; height: 12px; border: 1px solid #666; display: flex; align-items: center; gap: 3px; padding: 0 1px 0 2px; margin: 0 -4px 0 -2px; }
.box input { flex: 1; min-width: 0; }
.box input::placeholder { color: #999; opacity: 1; }
.search > svg { margin-right: 4px; }
.steps { height: 50px; border: 1px solid #666; border-right: 0; margin-top: 1px; }
.steps table { border-collapse: collapse; }
.steps th { font-weight: 400; text-align: left; height: 12px; padding: 0 1px; border-right: 1px solid #888; border-bottom: 1px solid #888; }
.steps td { background: #007aa8; color: #fff; height: 10px; padding: 0 1px; }
.steps th.c0 { width: 20px; padding: 0; }
.steps .c1 { width: 32px; }
.steps th.c2 { width: 18px; }
.steps th.c3 { width: 33px; }
.steps .num { text-align: right; }
.faded { opacity: .5; }
.side h3 { height: 17px; padding: 8px 4px 0 1px; display: flex; justify-content: space-between; font-size: 7px; }
.editor { flex: 1; min-height: 0; display: flex; flex-direction: column; background: #333; border: 1px solid #666; margin: 0 0 1px 1px; }
.head { display: flex; height: 12px; border-bottom: 1px solid #777; line-height: 12px; background: #2b2b2b; }
.head span { padding-left: 1px; }
.head span:first-child { width: 120px; border-right: 1px solid #777; }
.body { flex: 1; min-height: 0; display: flex; }
.rows { flex: 1; display: flex; flex-direction: column; }
.row { flex: 1; min-height: 0; display: flex; align-items: center; position: relative; }
.row > span:first-child, .row > strong { width: 119px; white-space: nowrap; flex: none; }
.l0 > :first-child { padding-left: 11px; }
.l1 > :first-child { padding-left: 22px; }
.l2 > :first-child { padding-left: 33px; }
.l3 > :first-child { padding-left: 44px; }
.l4 > :first-child { padding-left: 59px; }
.l5 > :first-child { padding-left: 67px; }
.open::before { content: ""; position: absolute; left: 25px; border: 2px solid transparent; border-top: 2px solid #fff; border-bottom: 0; }
.l3.open::before { left: 37px; }
.l4.open::before { left: 48px; }
.row input[type=text], .row select { width: 100%; height: 11px; border: 1px solid #707070; background: #232323; padding: 0 1px; appearance: none; min-width: 0; line-height: 8px; }
.row > input[type=text] { flex: 1; width: auto; }
.row .sel { flex: 1; display: flex; position: relative; }
.sel::after { content: ""; position: absolute; right: 3px; top: 3px; width: 3px; height: 3px; border: solid #aaa; border-width: 0 1px 1px 0; transform: rotate(45deg); }
.sel.pick::after, .pickbtn::after { content: ""; width: 3px; height: 3px; border: solid #aaa; border-width: 1px 0 0 1px; transform: none; top: 4px; right: 4px; }
.row input[type=checkbox] { appearance: none; width: 8px; height: 8px; margin: 0 2px; background: #262626; border: 1px solid #777; position: relative; }
.row input[type=checkbox]:checked { background: #0080b0; border-color: #0080b0; }
.row input:checked::after { content: ""; position: absolute; left: 2px; top: 0; width: 2px; height: 4px; border: solid #fff; border-width: 0 1px 1px 0; transform: rotate(40deg); }
.scroll { width: 7px; margin-left: 2px; background: #2d2d2d; display: flex; flex-direction: column; align-items: center; }
.scroll i { flex: 330; }
.scroll b { flex: 113; width: 100%; background: #666; }

.view { flex: 1; position: relative; display: flex; flex-direction: column; justify-content: flex-end; }
.scene { position: absolute; left: 0; top: -1px; width: 100%; height: 100%; overflow: hidden; }
.axis { fill: #ddd; font: 7px "Noto Sans", sans-serif; }
.axis text { stroke: none; }
.axis .top { font: 600 6px "Open Sans", sans-serif; fill: #fff; }

.legend { position: absolute; right: 0; top: 4px; width: 123px; padding-left: 1px; color: #eee; font: 7px/9px "Noto Sans", "Open Sans", sans-serif; white-space: nowrap; }
.legend p { padding-left: 2px; }
.legend .info { position: absolute; right: -1px; top: 9px; font-size: 8px; }
.handle { position: absolute; left: -4px; top: 1px; width: 6px; height: 8px; background: radial-gradient(circle, #999 40%, transparent 45%) 0 0 / 3px 3px; }
.scale { display: flex; gap: 9px; margin-top: 2px; }
.bar { margin: 6px 0 0; width: 6px; }
.bar i { display: block; height: 12px; position: relative; }
.bar i::before { content: ""; position: absolute; left: -2px; top: 0; width: 9px; height: 1px; background: #ccc; }
.bar .r9::after { content: ""; position: absolute; left: -2px; bottom: 0; width: 9px; height: 1px; background: #99b; }
.r1 { background: #f00; } .r2 { background: #ff7800; } .r3 { background: #fcdc00; } .r4 { background: #a0f400; } .r5 { background: #30f400; } .r6 { background: #28f8b4; } .r7 { background: #00c0d8; } .r8 { background: #0000fa; } .r9 { background: #0000c4; }
.scale li { height: 12px; line-height: 12px; }
.nores { display: flex; align-items: center; gap: 9px; margin-top: -1px; }
.nores i { width: 6px; height: 6px; background: #c8c8b8; }
.minmax { margin-top: 3px; }

.viewbar { display: flex; align-items: center; height: 14px; padding-left: 15px; margin-bottom: 7px; position: relative; }
.icons { display: flex; width: 301px; }
.icons svg { flex: 1; min-width: 0; height: 14px; }
.play { display: flex; align-items: center; gap: 4px; margin: 0 2px 0 17px; }
.viewbar input { appearance: none; width: 118px; height: 4px; background: #999; margin: 0; }
.viewbar input::-webkit-slider-thumb { appearance: none; width: 1px; height: 4px; background: #999; }
.frame { font-size: 8px; padding: 0 4px 0 7px; }

.backing { position: absolute; left: -5px; top: -1px; width: 8px; height: 339px; background: #232323; }
.peek { position: absolute; left: 0; top: -4px; width: 283px; height: 8px; overflow: hidden; display: flex; align-items: flex-end; background: #333; }
.strip { display: flex; height: 12px; flex: 1; color: #ddd; padding-bottom: 1px; font-size: 8px; }
.strip span { display: flex; align-items: center; justify-content: center; gap: 3px; border-right: 1px solid #555; }
.p1 { width: 58px; } .p2 { width: 20px; } .p3 { width: 97px; background: #0078a8; color: #fff; } .p4 { width: 21px; } .p5 { width: 20px; } .p6 { width: 41px; } .p7 { width: 21px; }
.dialog { position: absolute; left: -2px; top: 4px; width: 278px; height: 331px; background: #333; border: 1px solid #666; padding: 0 5px 5px 4px; display: flex; flex-direction: column; box-shadow: 1px 1px 2px #111; }
.dtitle { height: 21px; display: flex; align-items: center; gap: 9px; font-size: 8px; padding-top: 3px; }
.dtitle i { flex: 1; height: 9px; background: radial-gradient(circle, #aaa 25%, transparent 45%) 0 0 / 4px 3px; }
.panel { flex: 1; min-height: 0; border: 1px solid #777; display: flex; flex-direction: column; margin-bottom: 3px; }
.panel .head { height: 13px; }
.panel .head span:first-child { width: 122px; }
.panel .rows { padding: 0 3px 20px 0; }
.panel .head, .panel .row { font-size: 7px; }
.panel .row > span:first-child, .panel .row > strong { width: 122px; padding-left: 13px; }
.panel .sub > span:first-child { padding-left: 26px; }
.panel .row input[type=text], .panel .row select { height: 12px; color: #eee; }
.panel .open::before { left: 5px; }
.panel .row input[type=checkbox] { width: 9px; height: 9px; }
.panel .off, .panel .off input[type=text], .panel .off select { color: #888; opacity: 1; background: #333; }
.panel .off input[type=checkbox] { border-color: #555; background: #333; }
.pickbtn { flex: 1; height: 12px; border: 1px solid #707070; display: flex; align-items: center; justify-content: center; gap: 3px; position: relative; font-size: 7px; }
.pickbtn::after { position: absolute; }
.closebtn { align-self: flex-end; width: 53px; height: 16px; border: 1px solid #777; color: #eee; }

.status { height: 11px; display: flex; align-items: center; padding: 3px 6px 0 3px; gap: 7px; }
.status span { display: flex; gap: 2px; }
.status .subcase { margin: 0 0 0 44px; }
.status i { width: 1px; height: 9px; background: #555; }
.base { height: 3px; border-top: 1px solid #888; background: #101010; }
.marks { position: absolute; left: 0; top: 0; pointer-events: none; fill: none; stroke: #e81c1c; stroke-width: 5px; stroke-linecap: round; stroke-linejoin: round; }
```
